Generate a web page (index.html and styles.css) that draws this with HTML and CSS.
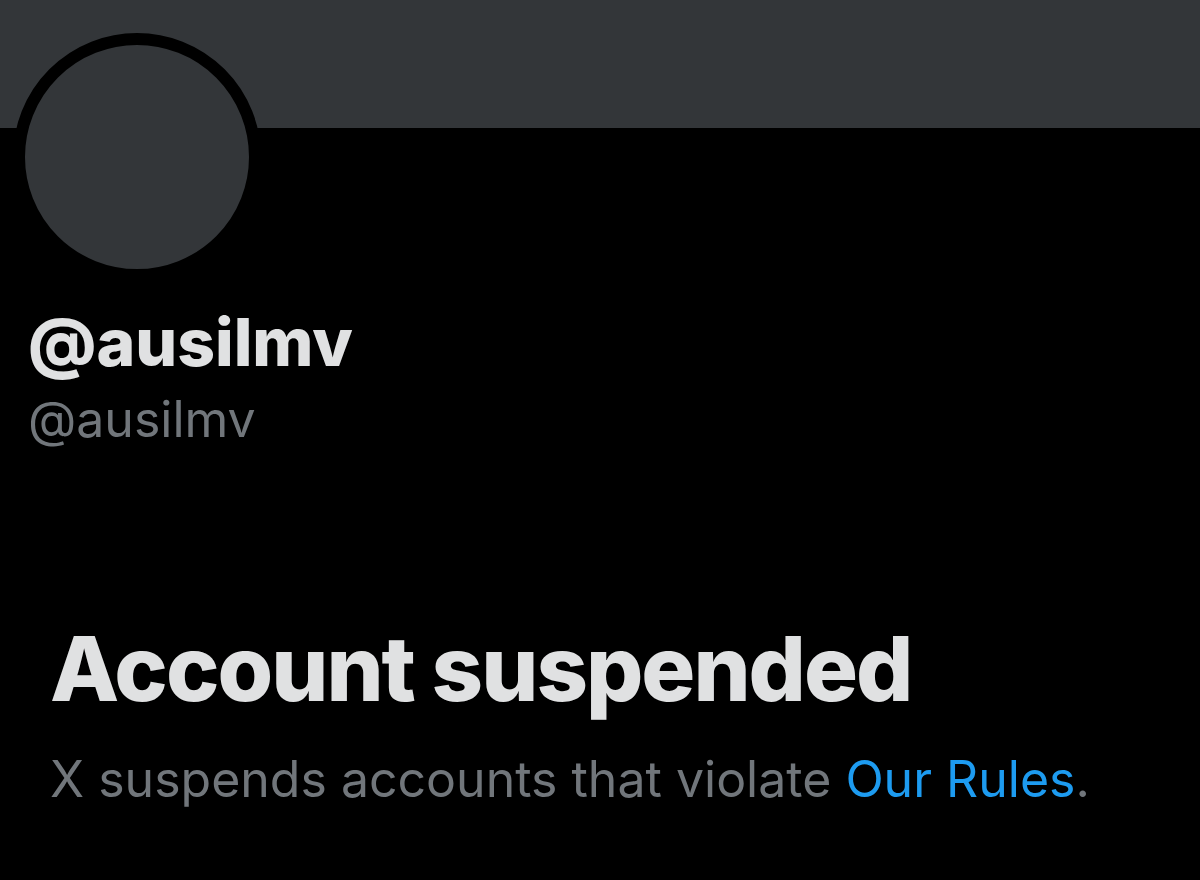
FILE: index.html
```html
<!DOCTYPE html>
<html>
<head>
<meta charset="utf-8">
<link rel="stylesheet" href="styles.css">
</head>
<body>
<div class="page">
  <div class="banner"></div>
  <div class="profile">
    <div class="avatar"></div>
    <div class="name">@ausilmv</div>
    <div class="handle">@ausilmv</div>
  </div>
  <div class="notice">
    <h1 class="title">Account suspended</h1>
    <p class="desc">X suspends accounts that violate <a class="link" href="#">Our Rules</a>.</p>
  </div>
</div>
</body>
</html>
```
FILE: styles.css
```css
html, body {
  margin: 0;
  padding: 0;
  background: #000;
}
.page {
  width: 1200px;
  height: 880px;
  background: #000;
  font-family: Inter, "Noto Sans", sans-serif;
  overflow: hidden;
}
.banner {
  height: 128px;
  background: #333639;
}
.profile {
  padding-left: 28px;
}
.avatar {
  width: 224px;
  height: 224px;
  border-radius: 50%;
  background: #333639;
  border: 12px solid #000;
  margin-top: -95px;
  margin-left: -15px;
}
.name {
  margin-top: 26px;
  font-size: 66px;
  font-weight: 800;
  color: #e0e1e2;
  line-height: 70px;
}
.handle {
  margin-top: 12px;
  font-size: 50px;
  color: #71767b;
  line-height: 60px;
}
.notice {
  padding-left: 50px;
  margin-top: 170px;
}
.title {
  margin: 0;
  font-size: 90px;
  font-weight: 800;
  color: #e0e1e2;
  line-height: 100px;
  letter-spacing: -2px;
}
.desc {
  margin: 30px 0 0;
  font-size: 50px;
  color: #71767b;
  line-height: 60px;
}
.link {
  color: #1d9bf0;
  text-decoration: none;
}
```
